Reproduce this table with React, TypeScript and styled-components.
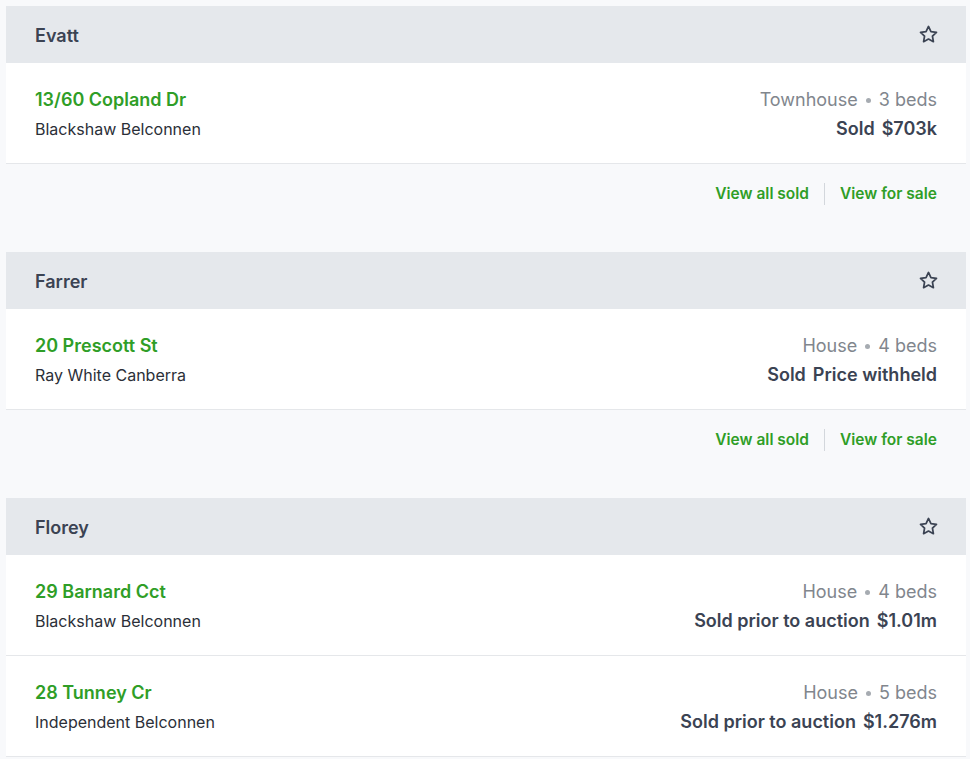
import React from 'react';
import styled, { createGlobalStyle } from 'styled-components';

const GlobalStyle = createGlobalStyle`
  body {
    margin: 0;
    background: #f8f9fb;
    font-family: Inter, "Noto Sans", "Liberation Sans", sans-serif;
    -webkit-font-smoothing: antialiased;
  }
`;

const Page = styled.div`
  width: 960px;
  padding: 6px 4px 0 6px;
`;

const Section = styled.section`
  display: flex;
  flex-direction: column;
`;

const Header = styled.div`
  height: 57px;
  box-sizing: border-box;
  display: flex;
  align-items: center;
  justify-content: space-between;
  padding: 2px 29px 0;
  background: #e5e8ec;
  color: #3b4353;
  font-size: 18px;
  font-weight: 600;
`;

const StarButton = styled.button`
  border: 0;
  background: none;
  padding: 0;
  margin: -2px -2px 0 0;
  display: flex;
  color: #3b4353;
  cursor: pointer;
`;

const Row = styled.div`
  height: 100px;
  box-sizing: content-box;
  display: flex;
  align-items: center;
  justify-content: space-between;
  padding: 0 29px;
  background: #fff;
  border-bottom: 1px solid #e5e7ea;
`;

const Col = styled.div<{ right?: boolean }>`
  display: flex;
  flex-direction: column;
  align-items: ${(p) => (p.right ? 'flex-end' : 'flex-start')};
  padding-top: 2px;
`;

const Address = styled.a`
  color: #2f9e27;
  font-size: 18px;
  font-weight: 600;
  line-height: 30px;
  text-decoration: none;
`;

const Agency = styled.div`
  color: #2b2f38;
  font-size: 16px;
  line-height: 28px;
`;

const Meta = styled.div`
  display: flex;
  align-items: center;
  color: #81868d;
  font-size: 18px;
  line-height: 30px;
`;

const Dot = styled.span`
  width: 5px;
  height: 5px;
  border-radius: 50%;
  background: #a6abb1;
  margin: 0 8px;
`;

const Price = styled.div`
  color: #3b4353;
  font-size: 18px;
  font-weight: 600;
  line-height: 28px;

  & > span + span {
    margin-left: 7px;
  }
`;

const Footer = styled.div`
  display: flex;
  justify-content: flex-end;
  align-items: center;
  padding: 20px 29px 48px;
`;

const FooterLink = styled.a`
  color: #2f9e27;
  font-size: 15.5px;
  font-weight: 600;
  line-height: 20px;
  text-decoration: none;
`;

const Divider = styled.span`
  width: 1px;
  height: 22px;
  margin: -1px 15px;
  background: #d3d7dc;
`;

const StarIcon = () => (
  <svg width="21" height="21" viewBox="0 0 24 24" fill="none" stroke="currentColor" strokeWidth="2" strokeLinejoin="round">
    <path d="M12 2.8l2.8 5.8 6.3.9-4.6 4.4 1.1 6.3L12 17.2l-5.6 3 1.1-6.3-4.6-4.4 6.3-.9z" />
  </svg>
);

type Listing = {
  address: string;
  agency: string;
  type: string;
  beds: number;
  status: string;
  price: string;
};

type Suburb = {
  name: string;
  listings: Listing[];
  footer?: boolean;
};

const suburbs: Suburb[] = [
  {
    name: 'Evatt',
    footer: true,
    listings: [
      { address: '13/60 Copland Dr', agency: 'Blackshaw Belconnen', type: 'Townhouse', beds: 3, status: 'Sold', price: '$703k' },
    ],
  },
  {
    name: 'Farrer',
    footer: true,
    listings: [
      { address: '20 Prescott St', agency: 'Ray White Canberra', type: 'House', beds: 4, status: 'Sold', price: 'Price withheld' },
    ],
  },
  {
    name: 'Florey',
    listings: [
      { address: '29 Barnard Cct', agency: 'Blackshaw Belconnen', type: 'House', beds: 4, status: 'Sold prior to auction', price: '$1.01m' },
      { address: '28 Tunney Cr', agency: 'Independent Belconnen', type: 'House', beds: 5, status: 'Sold prior to auction', price: '$1.276m' },
    ],
  },
];

export default function App() {
  return (
    <>
      <GlobalStyle />
      <Page>
        {suburbs.map((s) => (
          <Section key={s.name}>
            <Header>
              {s.name}
              <StarButton aria-label="Save suburb">
                <StarIcon />
              </StarButton>
            </Header>
            {s.listings.map((l) => (
              <Row key={l.address}>
                <Col>
                  <Address href="#">{l.address}</Address>
                  <Agency>{l.agency}</Agency>
                </Col>
                <Col right>
                  <Meta>
                    {l.type}
                    <Dot />
                    {l.beds} beds
                  </Meta>
                  <Price>
                    <span>{l.status}</span>
                    <span>{l.price}</span>
                  </Price>
                </Col>
              </Row>
            ))}
            {s.footer && (
              <Footer>
                <FooterLink href="#">View all sold</FooterLink>
                <Divider />
                <FooterLink href="#">View for sale</FooterLink>
              </Footer>
            )}
          </Section>
        ))}
      </Page>
    </>
  );
}
